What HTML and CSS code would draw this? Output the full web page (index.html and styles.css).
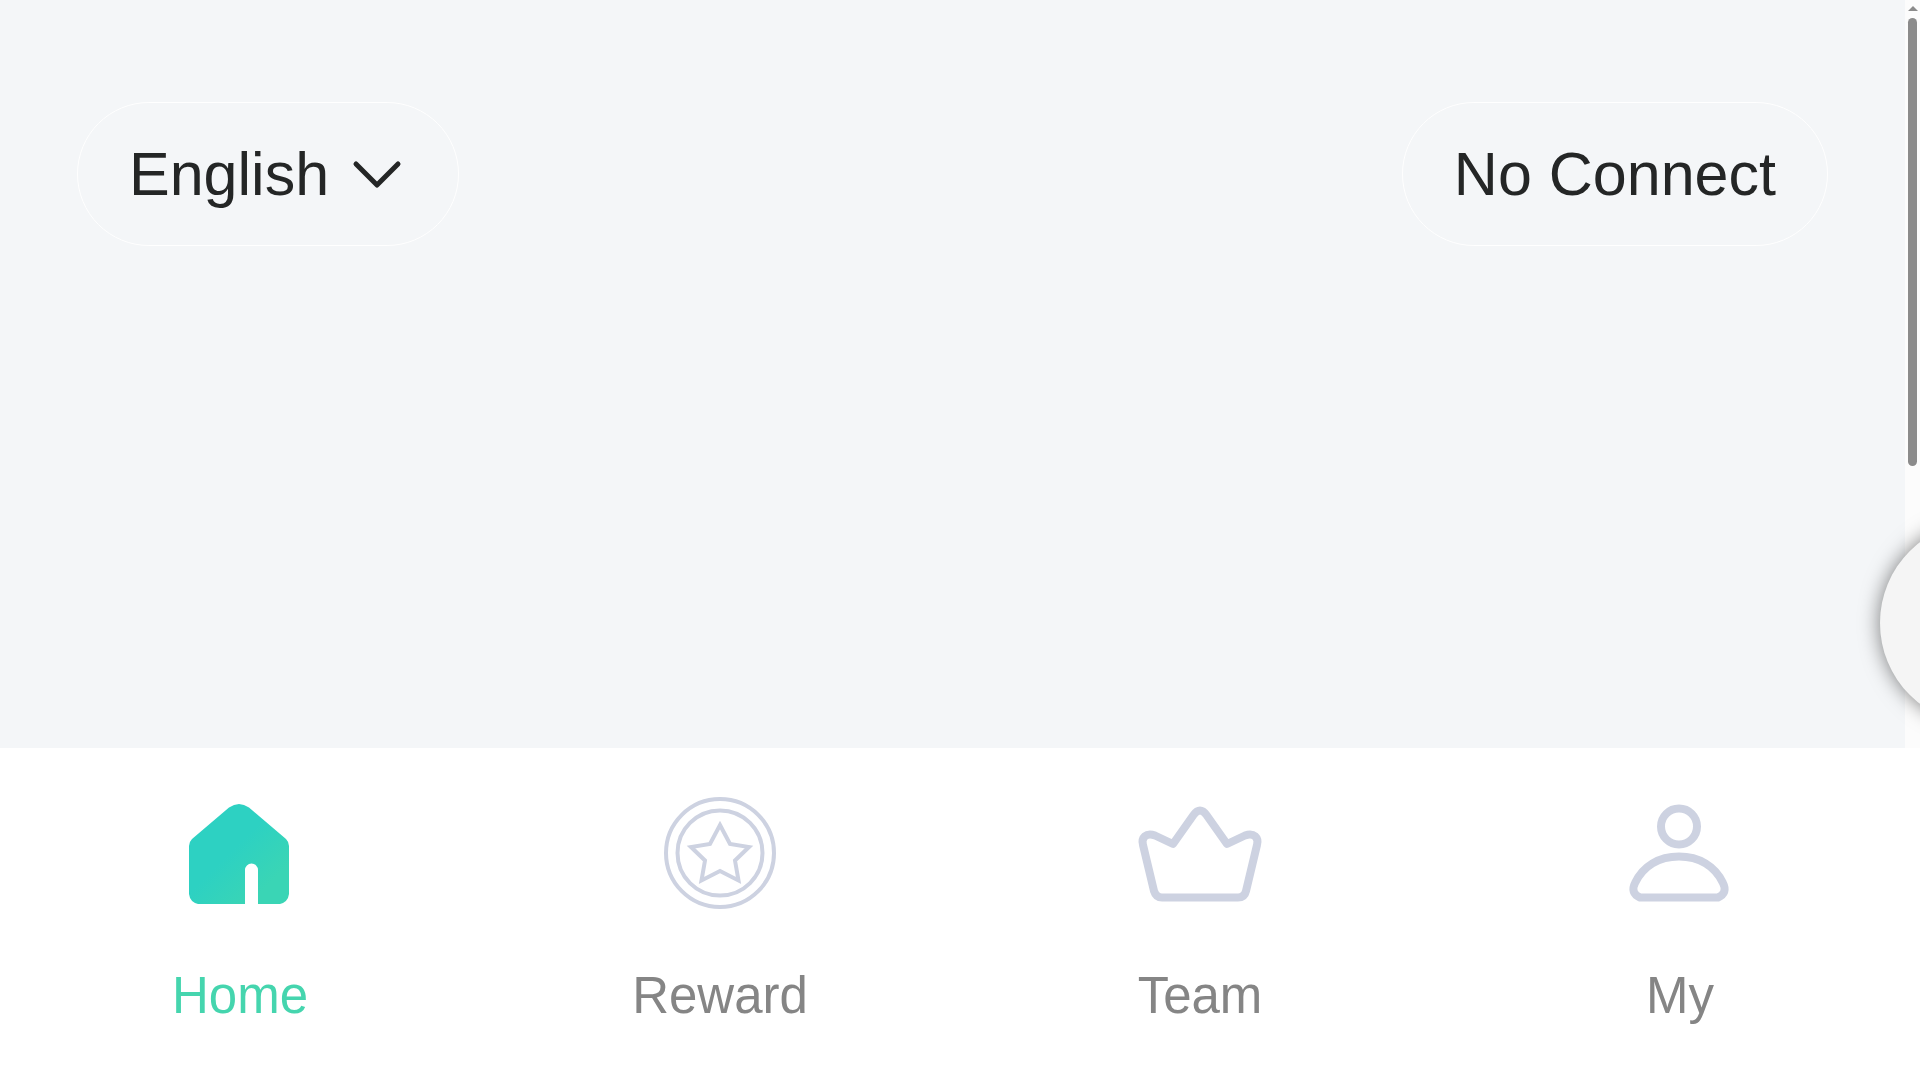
FILE: index.html
```html
<!DOCTYPE html>
<html lang="en">
<head>
    <meta charset="UTF-8">
    <meta name="viewport" content="width=device-width, initial-scale=1.0">
    <title>Home</title>
    <link rel="stylesheet" href="styles.css">
</head>
<body>
    <main class="content">
        <header class="header">
            <label class="pill">
                <select class="lang" aria-label="Language">
                    <option>English</option>
                </select>
                <svg class="chevron" viewBox="0 0 60 60" aria-hidden="true">
                    <path d="M9 20L30 41L51 20" />
                </svg>
            </label>
            <button class="pill" type="button">No Connect</button>
        </header>
    </main>

    <div class="scrollbar" aria-hidden="true">
        <div class="arrow"></div>
        <div class="thumb"></div>
    </div>

    <button class="float-btn" type="button" aria-label="Support"></button>

    <nav class="tabbar">
        <a class="tab active" href="#home">
            <svg viewBox="0 0 128 128" aria-hidden="true">
                <defs>
                    <linearGradient id="homeFill" x1="0" y1="0" x2="1" y2="1">
                        <stop offset="0.45" stop-color="#2dd1c2" />
                        <stop offset="0.8" stop-color="#3ad5b5" />
                    </linearGradient>
                </defs>
                <path fill="url(#homeFill)" d="M53 18.500Q63 11.500 73 18.500L110 50Q113 53 113 57V105Q112 113 104 115H82V81A6 6 0 0 0 69 81V115H22Q14 113 13 105V57Q13 53 16 50Z" />
            </svg>
            <span>Home</span>
        </a>
        <a class="tab" href="#reward">
            <svg class="line thin" viewBox="0 0 128 128" aria-hidden="true">
                <circle cx="64" cy="64" r="54" />
                <circle cx="64" cy="64" r="42.5" />
                <path d="M64 36L74 55L93 58L79 71.500L82.500 91.500L64 82L45.500 91.500L49 71.500L35 58L54 55Z" />
            </svg>
            <span>Reward</span>
        </a>
        <a class="tab" href="#team">
            <svg class="line" viewBox="0 0 128 128" aria-hidden="true">
                <path d="M57.500 26Q64 17 70.500 26L91 55L109 46.500C118 43 123 49 121 56L110 102Q108.500 108.500 102 108.500H26Q20 108.500 18 102L7 56C5 49 10 43 19 46.500L37 55Z" />
            </svg>
            <span>Team</span>
        </a>
        <a class="tab" href="#my">
            <svg class="line" viewBox="0 0 128 128" aria-hidden="true">
                <circle cx="63" cy="37.500" r="18" />
                <path d="M24 108.500H102Q112 104 107 94C99 77 83 67.500 63 67.500S27 77 19 94Q14 104 24 108.500Z" />
            </svg>
            <span>My</span>
        </a>
    </nav>
</body>
</html>
```

FILE: styles.css
```css
* {
    box-sizing: border-box;
}

body {
    margin: 0;
    min-height: 100vh;
    display: flex;
    flex-direction: column;
    background: #fcfcfc;
    font-family: "Liberation Sans", Arial, sans-serif;
    color: #242626;
}

.content {
    flex: 1;
    margin-right: 15px;
    background: #f4f6f8;
}

.header {
    display: flex;
    justify-content: space-between;
    padding: 102px 77px;
}

.pill {
    display: flex;
    align-items: center;
    gap: 17px;
    height: 144px;
    padding: 0 51px;
    border: 1px solid #fff;
    border-radius: 72px;
    background: transparent;
    font-family: inherit;
    font-size: 61px;
    color: inherit;
    cursor: pointer;
}

.lang {
    appearance: none;
    padding: 0;
    border: none;
    background: transparent;
    font: inherit;
    color: inherit;
    cursor: pointer;
}

.chevron {
    width: 60px;
    height: 60px;
    fill: none;
    stroke: #242626;
    stroke-width: 5;
    stroke-linecap: round;
    stroke-linejoin: round;
}

/* scrollbar */
.scrollbar {
    position: fixed;
    top: 0;
    right: 0;
    width: 15px;
    height: 100vh;
    padding: 6px 3px;
    background: #fcfcfc;
}

.arrow {
    border: 5px solid transparent;
    border-top: none;
    border-bottom-color: #8b8b8b;
}

.thumb {
    height: 448px;
    margin-top: 7px;
    border-radius: 5px;
    background: #8b8b8b;
}

/* floating button, half out of the window */
.float-btn {
    position: fixed;
    top: 521px;
    right: -164px;
    width: 204px;
    height: 204px;
    padding: 0;
    border: none;
    border-radius: 50%;
    background: #f5f5f5;
    box-shadow: 0 0 20px rgba(0, 0, 0, 0.5);
    cursor: pointer;
}

/* bottom tabs */
.tabbar {
    position: sticky;
    bottom: 0;
    display: flex;
    padding: 41px 0 54px;
    background: #fff;
}

.tab {
    flex: 1;
    display: flex;
    flex-direction: column;
    align-items: center;
    gap: 49px;
    font-size: 51px;
    line-height: 60px;
    color: #858585;
    text-decoration: none;
}

.tab svg {
    width: 128px;
    height: 128px;
}

.tab.active {
    color: #45d5ae;
}

.line {
    fill: none;
    stroke: #cdd2e1;
    stroke-width: 8;
    stroke-linejoin: round;
}

.line.thin {
    stroke-width: 4;
    stroke-linejoin: miter;
}
```
